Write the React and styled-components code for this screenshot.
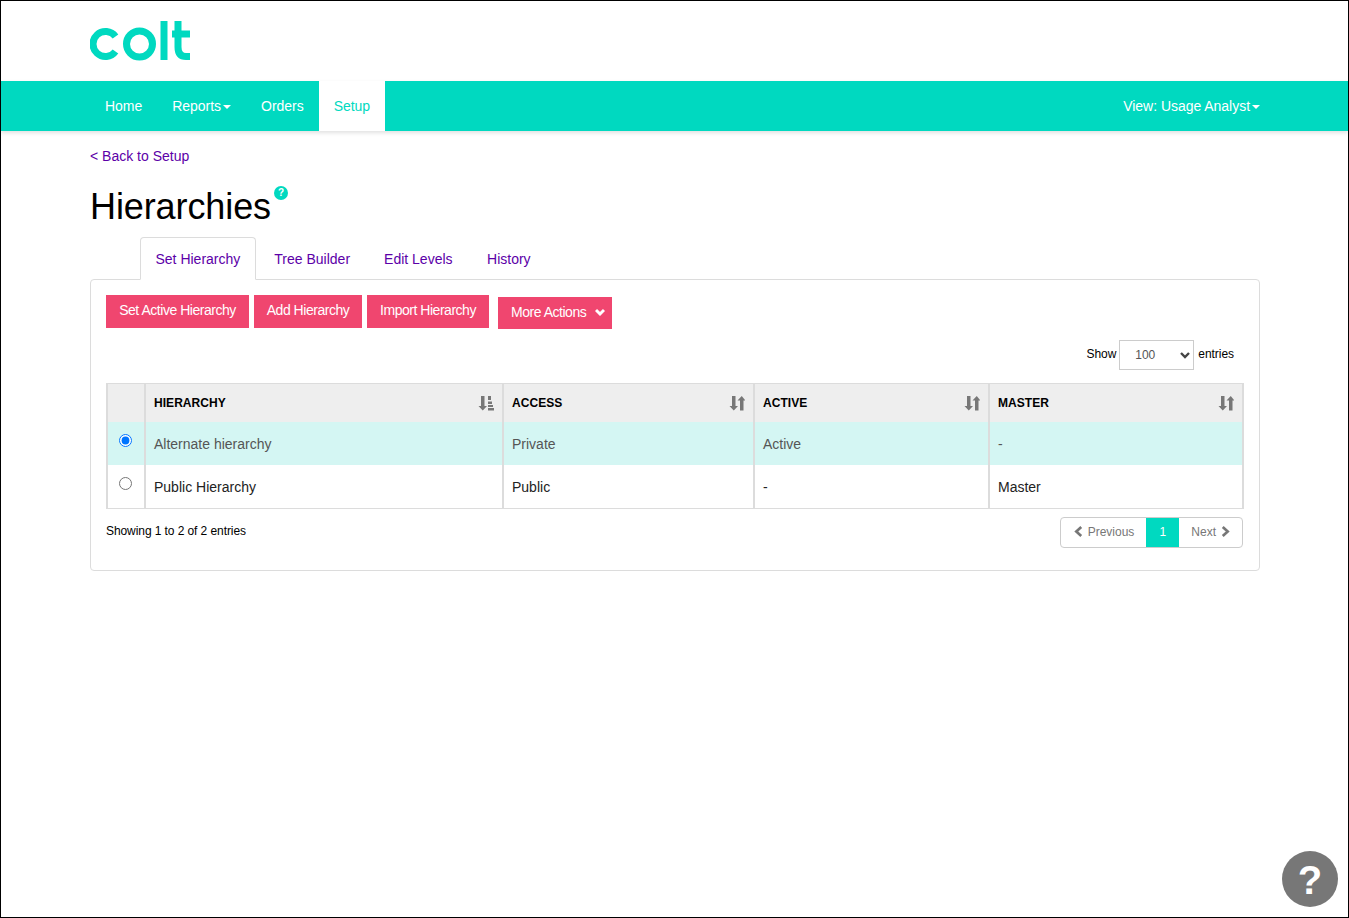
import React from 'react';
import styled, { createGlobalStyle } from 'styled-components';

const TEAL = '#00d9c0';
const LINK = '#5c00a8';
const PINK = '#f0466f';
const LINE = '#dcdcdc';

const GlobalStyle = createGlobalStyle`
  html, body {
    margin: 0;
    padding: 0;
    background: #fff;
  }
  body {
    font-family: "Liberation Sans", Arial, sans-serif;
    font-size: 14px;
    color: #000;
  }
`;

const Page = styled.div`
  box-sizing: border-box;
  width: 1349px;
  height: 918px;
  border: 1px solid #000;
  overflow: hidden;
  position: relative;
`;

const Header = styled.header`
  height: 80px;
  padding-left: 89px;
  display: flex;
  align-items: flex-start;
`;

const LogoSvg = styled.svg`
  display: block;
  margin-top: 20px;
`;

const NavBar = styled.nav`
  height: 50px;
  background: ${TEAL};
  padding: 0 73px 0 89px;
  display: flex;
  justify-content: space-between;
  box-shadow: 0 2px 4px rgba(0, 0, 0, 0.12);
`;

const NavGroup = styled.div`
  display: flex;
`;

const NavItem = styled.a`
  display: flex;
  align-items: center;
  height: 50px;
  padding: 0 15px;
  font-size: 14px;
  letter-spacing: -0.03px;
  color: ${(p) => (p.$active ? TEAL : '#fff')};
  background: ${(p) => (p.$active ? '#fff' : 'transparent')};
`;

const Caret = styled.span`
  display: inline-block;
  margin-left: 2px;
  margin-top: 2px;
  border-top: 4px solid #fff;
  border-left: 4px solid transparent;
  border-right: 4px solid transparent;
`;

const Content = styled.main`
  padding: 17px 89px 0;
`;

const BackLink = styled.a`
  display: block;
  font-size: 14px;
  line-height: 16px;
  color: ${LINK};
`;

const TitleRow = styled.div`
  display: flex;
  align-items: flex-start;
  margin-top: 22px;
  height: 51px;
`;

const Title = styled.h1`
  margin: 0;
  font-size: 36px;
  font-weight: 400;
  line-height: 42px;
  letter-spacing: -0.1px;
`;

const HelpDot = styled.span`
  width: 14px;
  height: 14px;
  margin: 0 0 0 3px;
  border-radius: 50%;
  background: ${TEAL};
  color: #fff;
  font-size: 10px;
  font-weight: 700;
  line-height: 14px;
  text-align: center;
`;

const Tabs = styled.div`
  display: flex;
  padding-left: 50px;
  height: 43px;
  margin-bottom: -1px;
  position: relative;
`;

const Tab = styled.a`
  box-sizing: border-box;
  height: 43px;
  padding: 13px ${(p) => p.$px || 14.5}px 0;
  font-size: 14px;
  line-height: 16px;
  color: ${LINK};
  border: 1px solid ${(p) => (p.$active ? LINE : 'transparent')};
  border-bottom: 1px solid ${(p) => (p.$active ? '#fff' : 'transparent')};
  border-radius: 4px 4px 0 0;
  background: ${(p) => (p.$active ? '#fff' : 'transparent')};
`;

const Panel = styled.section`
  box-sizing: border-box;
  width: 1170px;
  height: 292px;
  border: 1px solid ${LINE};
  border-radius: 4px;
  padding: 15px 15px 0;
`;

const ActionRow = styled.div`
  display: flex;
  align-items: flex-start;
  gap: 5px;
`;

const ActionButton = styled.button`
  box-sizing: border-box;
  width: ${(p) => p.$w}px;
  height: 33px;
  padding: 0 0 3px;
  border: 0;
  background: ${PINK};
  color: #fff;
  font-family: inherit;
  font-size: 14px;
  letter-spacing: -0.47px;
`;

const MoreButton = styled(ActionButton)`
  height: 32px;
  margin: 2px 0 0 4px;
  display: flex;
  align-items: center;
  justify-content: space-between;
  padding: 0 7px 2px 13px;
`;

const LengthRow = styled.div`
  display: flex;
  justify-content: flex-end;
  align-items: center;
  gap: 3px;
  height: 30px;
  margin-top: 10px;
  padding-right: 10px;
  font-size: 12px;
  letter-spacing: -0.05px;
`;

const FakeSelect = styled.div`
  box-sizing: border-box;
  width: 75px;
  height: 30px;
  margin-top: 1px;
  border: 1px solid #ccc;
  display: flex;
  align-items: center;
  justify-content: space-between;
  padding: 0 3px 0 15px;
  color: #555;
  margin-right: 1px;
`;

const Table = styled.table`
  box-sizing: border-box;
  width: 1138px;
  margin-top: 14px;
  border-collapse: collapse;
  table-layout: fixed;
  border: 2px solid ${LINE};
  border-top-width: 1px;
  border-bottom-width: 1px;
`;

const HeadCell = styled.th`
  box-sizing: border-box;
  width: ${(p) => p.$w}px;
  height: 38px;
  padding: 0 8px;
  background: #eee;
  border-right: 2px solid ${LINE};
  font-size: 12px;
  font-weight: 700;
  text-align: left;
  letter-spacing: 0.05px;
  &:last-child {
    border-right: 0;
  }
`;

const HeadInner = styled.div`
  display: flex;
  justify-content: space-between;
  align-items: center;
`;

const Row = styled.tr`
  background: ${(p) => (p.$selected ? '#d4f6f3' : '#fff')};
  color: ${(p) => (p.$selected ? '#555' : '#222')};
`;

const Cell = styled.td`
  box-sizing: border-box;
  height: ${(p) => p.$h}px;
  padding: 2px 8px 0;
  font-size: 14px;
  border-right: 2px solid ${LINE};
  &:last-child {
    border-right: 0;
  }
`;

const RadioCell = styled(Cell)`
  padding: 0 2px 8px 0;
  text-align: center;
`;

const Radio = styled.input`
  margin: 0;
  width: 13px;
  height: 13px;
  vertical-align: middle;
`;

const FooterRow = styled.div`
  display: flex;
  justify-content: space-between;
  align-items: flex-start;
  margin-top: 8px;
  width: 1137px;
`;

const Info = styled.div`
  font-size: 12px;
  line-height: 14px;
  margin-top: 7px;
  letter-spacing: -0.08px;
`;

const Pager = styled.div`
  box-sizing: border-box;
  height: 31px;
  display: flex;
  border: 1px solid #ccc;
  border-radius: 4px;
  overflow: hidden;
  font-size: 12px;
  color: #777;
`;

const PagerBtn = styled.span`
  display: flex;
  align-items: center;
  gap: 4px;
  padding: 0 ${(p) => p.$pr || 12}px 2px ${(p) => p.$pl || 12}px;
`;

const PagerCurrent = styled.span`
  width: 33px;
  margin: -1px 0;
  padding-bottom: 2px;
  background: ${TEAL};
  color: #fff;
  display: flex;
  align-items: center;
  justify-content: center;
`;

const FloatHelp = styled.button`
  position: absolute;
  right: 10px;
  bottom: 10px;
  width: 56px;
  height: 56px;
  padding: 0;
  border: 0;
  border-radius: 50%;
  background: #777;
  color: #fff;
  font-family: "Liberation Sans", Arial, sans-serif;
  font-size: 40px;
  font-weight: 700;
  line-height: 58px;
  text-align: center;
`;

const Logo = () => (
  <LogoSvg width="100" height="40" viewBox="0 0 100 40">
    <g fill="none" stroke={TEAL} strokeWidth="7">
      <path d="M25.500 15.500 A12.500 12.500 0 1 0 25.500 30.500" />
      <circle cx="49.500" cy="23" r="13" />
      <path d="M74 0 V39" />
      <path d="M88 0 V26 Q88 35.500 96 35.500 H100" />
      <path d="M82 13 H100" />
    </g>
  </LogoSvg>
);

const SortIcon = ({ sorted }) => (
  <svg width="16" height="16" viewBox="0 0 16 16" fill="#777">
    <path d="M3 1h3.500v10H9L4.750 15.500 .5 11H3z" />
    {sorted ? (
      <path d="M10 1h3v4h-3zM10 6.500h4v2.500h-4zM10 10h5v2h-5zM10 13h6v2.500h-6z" />
    ) : (
      <path d="M11 15.500h3.500V5.500H16.500L12.750 1 8.500 5.500H11z" />
    )}
  </svg>
);

const Chevron = ({ dir, color = '#777', size = 10, weight = 2.4 }) => {
  const d = { left: 'M7.500 1 3 5l4.500 4', right: 'M2.500 1 7 5 2.500 9', down: 'M1 3l4 4 4-4' }[dir];
  return (
    <svg width={size} height={size} viewBox="0 0 10 10" fill="none" stroke={color} strokeWidth={weight}>
      <path d={d} />
    </svg>
  );
};

const columns = [
  { key: 'radio', w: 38 },
  { key: 'HIERARCHY', w: 358, sorted: true },
  { key: 'ACCESS', w: 251 },
  { key: 'ACTIVE', w: 235 },
  { key: 'MASTER', w: 254 },
];

const rows = [
  { selected: true, h: 43, cells: ['Alternate hierarchy', 'Private', 'Active', '-'] },
  { selected: false, h: 44, cells: ['Public Hierarchy', 'Public', '-', 'Master'] },
];

export default function App() {
  return (
    <>
      <GlobalStyle />
      <Page>
        <Header>
          <Logo />
        </Header>
        <NavBar>
          <NavGroup>
            <NavItem>Home</NavItem>
            <NavItem>Reports<Caret /></NavItem>
            <NavItem>Orders</NavItem>
            <NavItem $active>Setup</NavItem>
          </NavGroup>
          <NavGroup>
            <NavItem>View: Usage Analyst<Caret /></NavItem>
          </NavGroup>
        </NavBar>
        <Content>
          <BackLink>&lt; Back to Setup</BackLink>
          <TitleRow>
            <Title>Hierarchies</Title>
            <HelpDot>?</HelpDot>
          </TitleRow>
          <Tabs>
            <Tab $active>Set Hierarchy</Tab>
            <Tab $px={17.5}>Tree Builder</Tab>
            <Tab $px={14.5}>Edit Levels</Tab>
            <Tab $px={18}>History</Tab>
          </Tabs>
          <Panel>
            <ActionRow>
              <ActionButton $w={143}>Set Active Hierarchy</ActionButton>
              <ActionButton $w={108}>Add Hierarchy</ActionButton>
              <ActionButton $w={122}>Import Hierarchy</ActionButton>
              <MoreButton $w={114}>
                More Actions
                <Chevron dir="down" color="#fff" weight={3} />
              </MoreButton>
            </ActionRow>
            <LengthRow>
              Show
              <FakeSelect>
                100
                <Chevron dir="down" color="#444" />
              </FakeSelect>
              entries
            </LengthRow>
            <Table>
              <thead>
                <tr>
                  {columns.map((c) => (
                    <HeadCell key={c.key} $w={c.w}>
                      {c.key !== 'radio' && (
                        <HeadInner>
                          {c.key}
                          <SortIcon sorted={c.sorted} />
                        </HeadInner>
                      )}
                    </HeadCell>
                  ))}
                </tr>
              </thead>
              <tbody>
                {rows.map((r) => (
                  <Row key={r.cells[0]} $selected={r.selected}>
                    <RadioCell $h={r.h}>
                      <Radio type="radio" name="hierarchy" defaultChecked={r.selected} />
                    </RadioCell>
                    {r.cells.map((text, i) => (
                      <Cell key={i} $h={r.h}>{text}</Cell>
                    ))}
                  </Row>
                ))}
              </tbody>
            </Table>
            <FooterRow>
              <Info>Showing 1 to 2 of 2 entries</Info>
              <Pager>
                <PagerBtn>
                  <Chevron dir="left" size={11} />
                  Previous
                </PagerBtn>
                <PagerCurrent>1</PagerCurrent>
                <PagerBtn $pr={11}>
                  Next
                  <Chevron dir="right" size={11} />
                </PagerBtn>
              </Pager>
            </FooterRow>
          </Panel>
        </Content>
        <FloatHelp>?</FloatHelp>
      </Page>
    </>
  );
}
